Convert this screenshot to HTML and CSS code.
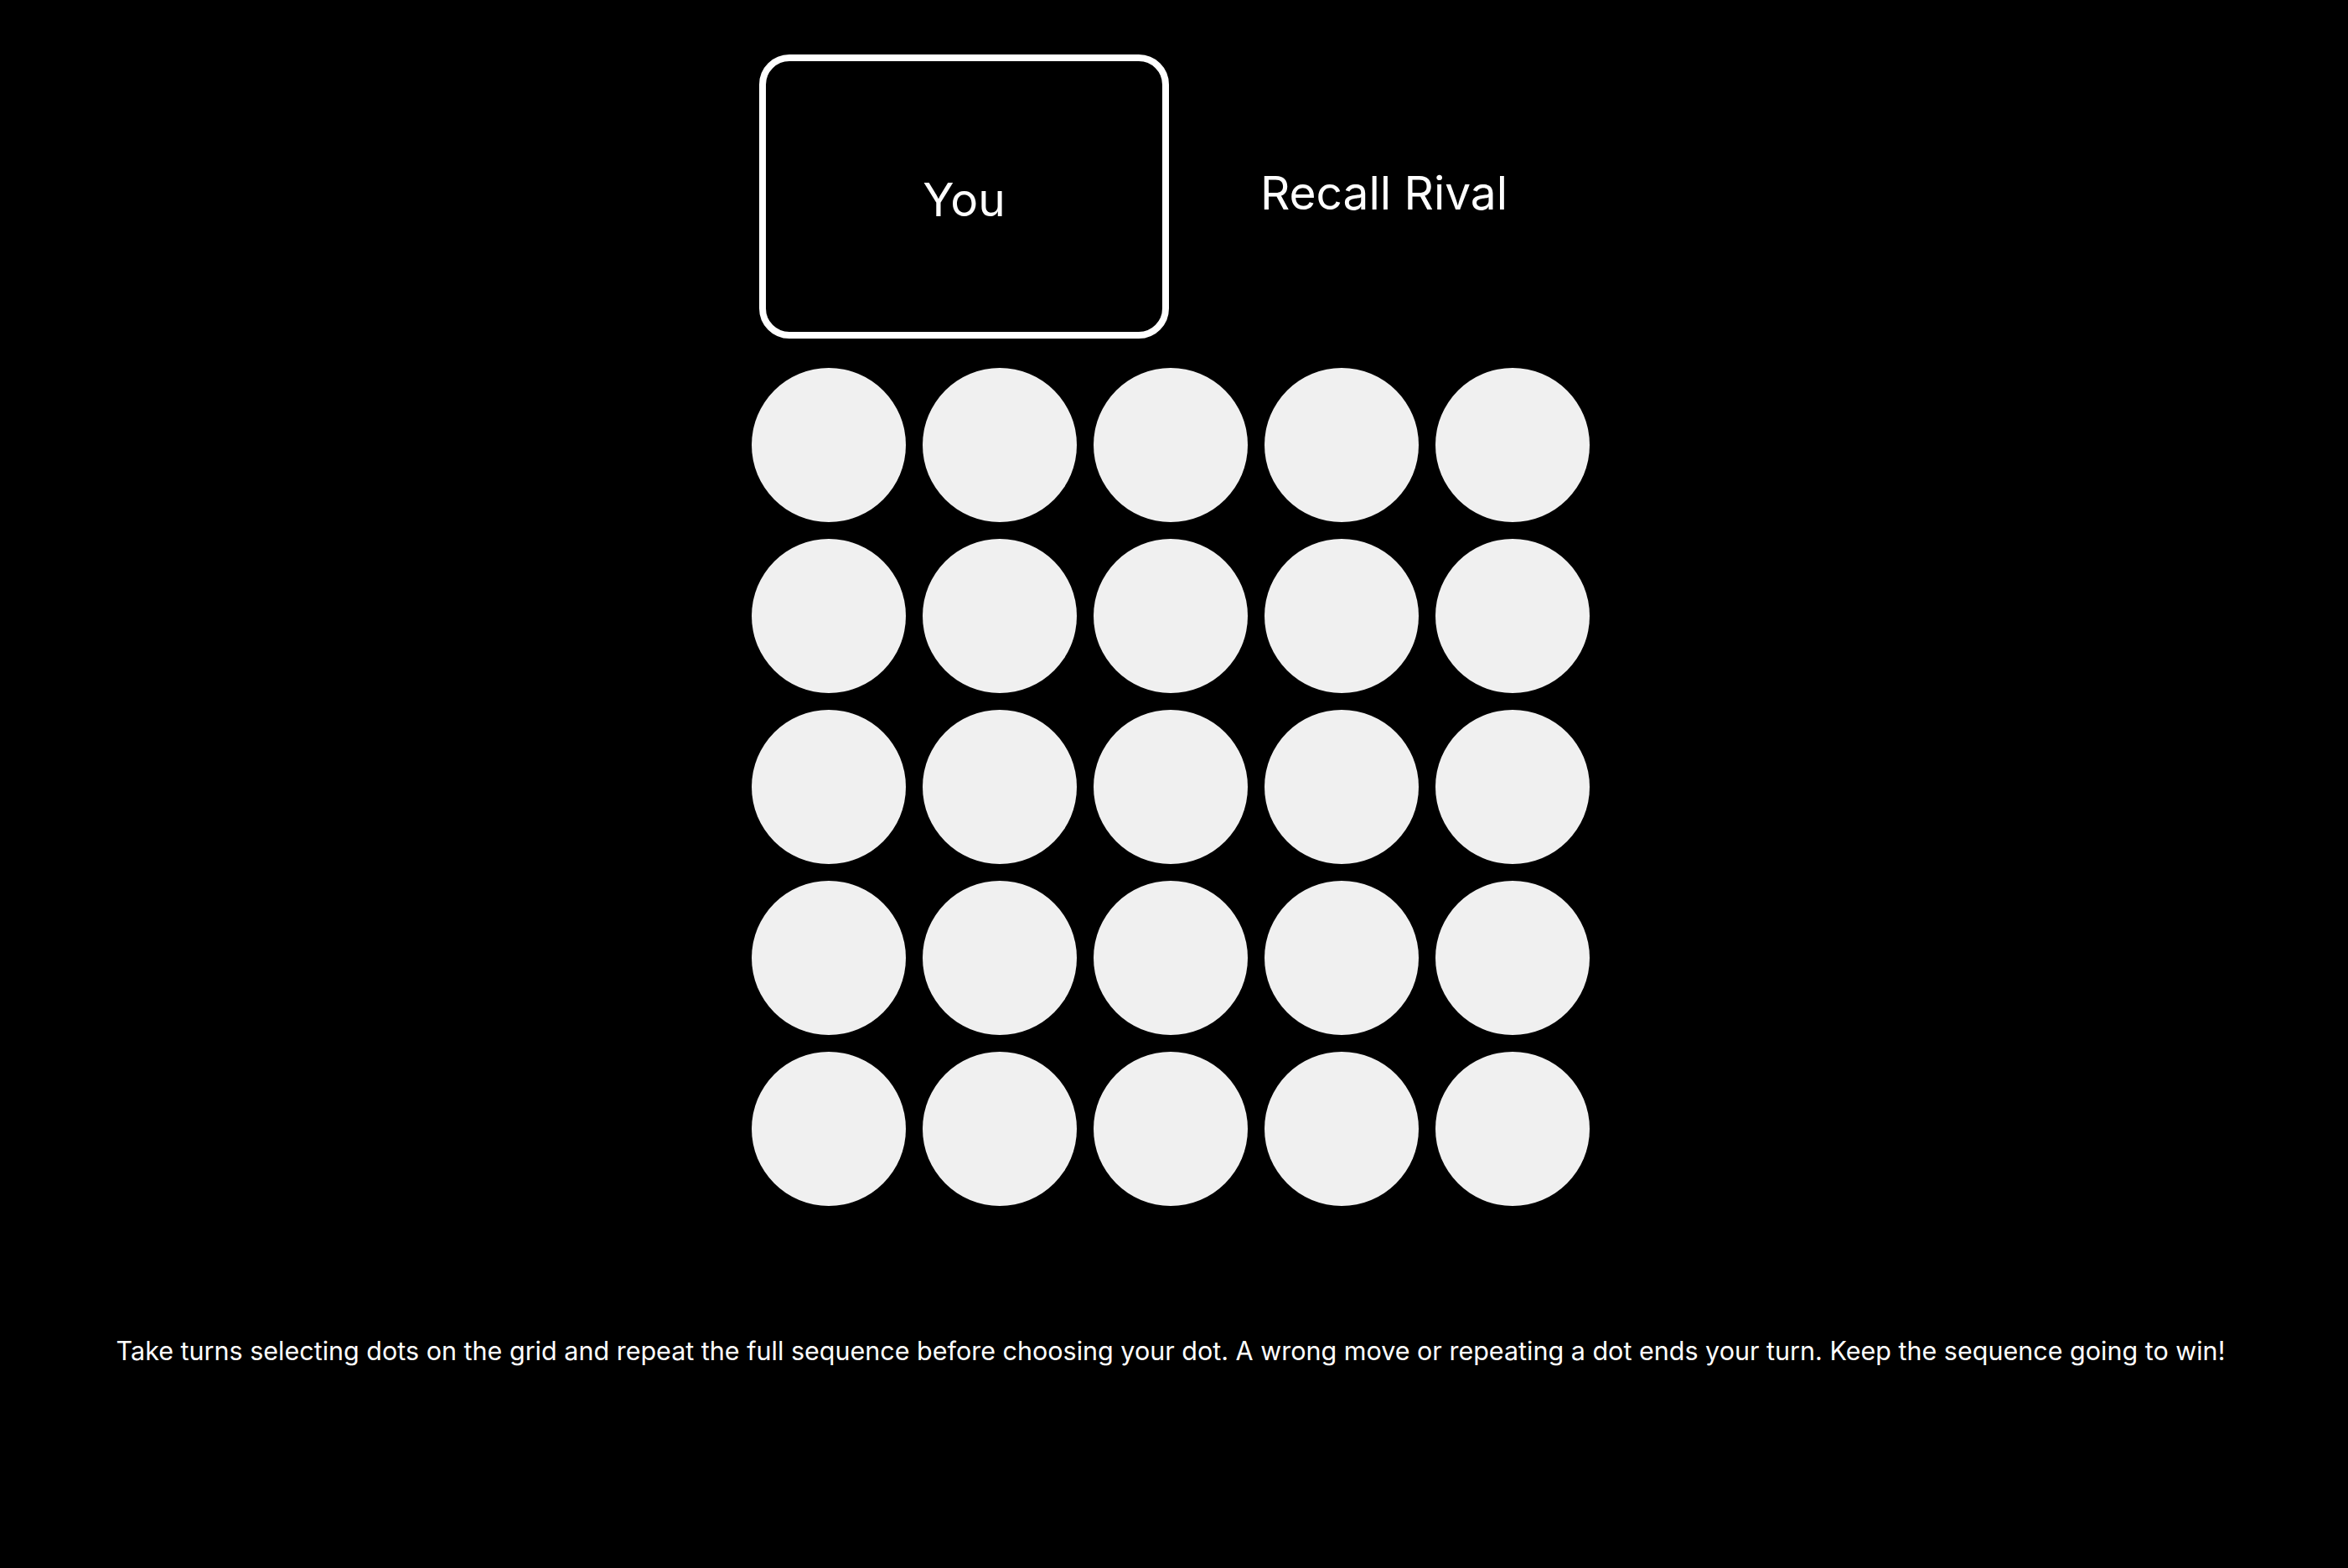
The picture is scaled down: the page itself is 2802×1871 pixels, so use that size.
FILE: index.html
```html
<!DOCTYPE html>
<html lang="en">
<head>
    <meta charset="UTF-8">
    <meta name="viewport" content="width=device-width, initial-scale=1.0">
    <title>Recall Rival</title>
    <link rel="stylesheet" href="styles.css">
</head>
<body>
    <div class="game">
        <header class="players">
            <div class="player active">You</div>
            <div class="player">Recall Rival</div>
        </header>

        <main class="board">
            <button class="dot"></button>
            <button class="dot"></button>
            <button class="dot"></button>
            <button class="dot"></button>
            <button class="dot"></button>
            <button class="dot"></button>
            <button class="dot"></button>
            <button class="dot"></button>
            <button class="dot"></button>
            <button class="dot"></button>
            <button class="dot"></button>
            <button class="dot"></button>
            <button class="dot"></button>
            <button class="dot"></button>
            <button class="dot"></button>
            <button class="dot"></button>
            <button class="dot"></button>
            <button class="dot"></button>
            <button class="dot"></button>
            <button class="dot"></button>
            <button class="dot"></button>
            <button class="dot"></button>
            <button class="dot"></button>
            <button class="dot"></button>
            <button class="dot"></button>
        </main>

        <p class="rules">Take turns selecting dots on the grid and repeat the full sequence before choosing your dot. A wrong move or repeating a dot ends your turn. Keep the sequence going to win!</p>
    </div>
</body>
</html>
```

FILE: styles.css
```css
* {
    margin: 0;
    padding: 0;
    box-sizing: border-box;
}

body {
    font-family: Inter, "Noto Sans", sans-serif;
    background-color: #000;
    color: #fff;
    padding-right: 8px;
}

.game {
    display: flex;
    flex-direction: column;
    align-items: center;
    padding-top: 65px;
}

/* Spelers */
.players {
    display: flex;
    align-items: flex-start;
    gap: 20px;
    width: 982px;
    margin-bottom: 35px;
}

.player {
    flex: 1 1 0;
    box-sizing: content-box;
    padding: 132px 0 124px;
    font-size: 55px;
    line-height: 67px;
    text-align: center;
    border-radius: 36px;
}

.player.active {
    border: 8px solid #fff;
}

/* Bord */
.board {
    display: grid;
    grid-template-columns: repeat(5, 184px);
    grid-auto-rows: 184px;
    gap: 20px;
}

.dot {
    width: 184px;
    height: 184px;
    border: none;
    border-radius: 50%;
    background-color: #f0f0f0;
    cursor: pointer;
}

.rules {
    margin-top: 154px;
    font-size: 30.5px;
    text-align: center;
}
```
